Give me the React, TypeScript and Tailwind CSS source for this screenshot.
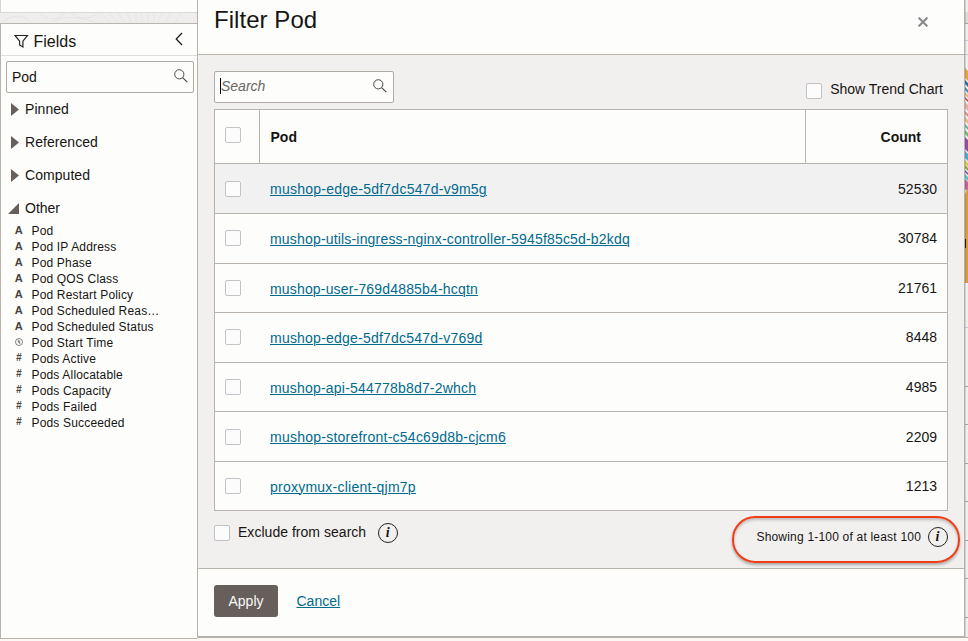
import React from "react";

const groups = ["Pinned", "Referenced", "Computed"];

const fields = [
  { kind: "A", name: "Pod" },
  { kind: "A", name: "Pod IP Address" },
  { kind: "A", name: "Pod Phase" },
  { kind: "A", name: "Pod QOS Class" },
  { kind: "A", name: "Pod Restart Policy" },
  { kind: "A", name: "Pod Scheduled Reas…" },
  { kind: "A", name: "Pod Scheduled Status" },
  { kind: "T", name: "Pod Start Time" },
  { kind: "#", name: "Pods Active" },
  { kind: "#", name: "Pods Allocatable" },
  { kind: "#", name: "Pods Capacity" },
  { kind: "#", name: "Pods Failed" },
  { kind: "#", name: "Pods Succeeded" },
];

const rows = [
  { pod: "mushop-edge-5df7dc547d-v9m5g", count: "52530", h: "h-[50px] bg-[#f1f1f2]", link: "pt-0.5 tracking-[0.24px]" },
  { pod: "mushop-utils-ingress-nginx-controller-5945f85c5d-b2kdq", count: "30784", h: "h-[50px] pb-0.5", link: "pt-1 tracking-[0.18px]" },
  { pod: "mushop-user-769d4885b4-hcqtn", count: "21761", h: "h-[49px]", link: "pt-0.5 tracking-[0.17px]" },
  { pod: "mushop-edge-5df7dc547d-v769d", count: "8448", h: "h-[50px] pb-0.5", link: "pt-1 tracking-[0.22px]" },
  { pod: "mushop-api-544778b8d7-2whch", count: "4985", h: "h-[49px]", link: "pt-0.5 tracking-[0.2px]" },
  { pod: "mushop-storefront-c54c69d8b-cjcm6", count: "2209", h: "h-[50px]", link: "pt-0.5 tracking-[0.24px]" },
  { pod: "proxymux-client-qjm7p", count: "1213", h: "h-[49px] pb-px", link: "pt-0.5 tracking-[0.24px]" },
];

function SearchIcon() {
  return (
    <svg width="14" height="14" viewBox="0 0 14 14" fill="none" stroke="#4c4845" className="shrink-0">
      <circle cx="5.3" cy="5.3" r="4.6" strokeWidth="1" />
      <path d="M8.6 8.6 L13.3 13.1" strokeWidth="1.2" />
    </svg>
  );
}

function InfoIcon() {
  return (
    <span className="flex size-5 shrink-0 items-center justify-center rounded-full border border-[#222] pr-px font-['Liberation_Serif',serif] text-[14px] leading-none font-bold text-[#161513] italic">
      i
    </span>
  );
}

function Checkbox() {
  return <span className="block size-4 shrink-0 rounded-[2px] border border-[#c2c3c6] bg-[#fcfcfd]" />;
}

function FieldKind({ kind }: { kind: string }) {
  if (kind === "T") {
    return (
      <svg width="8" height="8" viewBox="0 0 8 8" fill="none" stroke="#55504c" strokeWidth="0.7" className="mb-0.5">
        <circle cx="4" cy="4" r="3.5" />
        <path d="M3.4 1.8 V4.2 L5.2 6 M4.6 2.4 V5" />
      </svg>
    );
  }
  if (kind === "#") {
    return <span className="mb-0.5 text-[10px] leading-none font-bold text-[#45413e] italic">#</span>;
  }
  return <span className="mb-0.5 text-[11px] leading-none font-bold text-[#45413e]">A</span>;
}

function FieldsPanel() {
  return (
    <aside className="flex h-[641px] w-[197px] shrink-0 flex-col">
      <div className="h-[13px] border-b border-l border-b-[#d8d9da] border-l-[#d8d6d3] bg-[#fdfdfc]" />
      <svg width="197" height="10" className="block shrink-0 bg-[#f0eeec]" fill="none" stroke="#e7e6e4">
        <path d="M2 9 C12 1 22 2 30 8 M40 0 C47 8 59 8 65 0 M52 9 C70 0 84 7 96 9 M70 0 C82 8 92 5 99 0 M100 0 L110 9 M108 0 L118 9 M118 0 L124 9 M127 0 L131 9 M136 0 V9 M142 0 V9 M148 0 V9 M154 0 V9 M162 0 L158 9 M170 0 L166 9 M180 0 L176 9" />
      </svg>
      <div className="h-[616px] border-t border-b border-l border-[#bab4ae] bg-[#fdfdfb]">
        <div className="flex h-8 items-center border-b border-[#dddfdf] pr-[14px] pl-[13px]">
          <svg width="15" height="15" viewBox="0 0 15 15" fill="none" stroke="#24211f" strokeWidth="1.2" className="mt-[3px]">
            <path d="M1 1.5 H13.4 L8.9 7.2 V12.9 L5.6 11 V7.2 Z" />
          </svg>
          <span className="mt-[5px] ml-[4.5px] flex-1 text-[16px] leading-5">Fields</span>
          <svg width="8" height="14" viewBox="0 0 8 14" fill="none" stroke="#161513" strokeWidth="1.2" className="mb-0.5">
            <path d="M7 1 L1.2 7 L7 13" />
          </svg>
        </div>
        <div className="mt-[5px] ml-[5px] flex h-8 w-[188px] items-center justify-between rounded-[2px] border border-[#b0aba5] bg-[#fdfdfb] pr-[5px] pl-[5px]">
          <span className="mb-px text-[14px] leading-4">Pod</span>
          <span className="-mt-0.5">
            <SearchIcon />
          </span>
        </div>
        <ul className="-mt-px text-[14px] leading-4">
          {groups.map((g) => (
            <li key={g} className="flex h-[33px] items-center pl-[10px]">
              <svg width="8" height="13" viewBox="0 0 8 13" className="mt-px mr-[6px]">
                <path d="M0 0 L8 6.5 L0 13 Z" fill="#665f5b" />
              </svg>
              <span className="tracking-[0.05px]">{g}</span>
            </li>
          ))}
          <li className="flex h-[33px] items-center pl-[7px]">
            <svg width="11" height="11" viewBox="0 0 11 11" className="mt-px mr-[6px]">
              <path d="M11 0 V11 H0 Z" fill="#665f5b" />
            </svg>
            Other
          </li>
        </ul>
        <ul className="-mt-px text-[12px] leading-4">
          {fields.map((f) => (
            <li key={f.name} className="flex h-4 items-center whitespace-nowrap">
              <span className="flex w-[30.5px] justify-center pl-[5px]">
                <FieldKind kind={f.kind} />
              </span>
              <span className="mb-px tracking-[0.17px]">{f.name}</span>
            </li>
          ))}
        </ul>
      </div>
      <div className="h-0.5 bg-[#fbf8f6]" />
    </aside>
  );
}

function PodTable() {
  return (
    <div className="mt-[6px] h-[402px] w-[734px] border border-[#b8b3ac] bg-[#fdfdfb]">
      <div className="flex h-[54px] items-stretch border-b border-[#b8b3ac] text-[14px] font-bold">
        <div className="flex w-[45px] items-center border-r border-[#b8b3ac] pb-[3px] pl-[10px]">
          <Checkbox />
        </div>
        <div className="flex w-[546px] items-center border-r border-[#b8b3ac] pt-px pl-[10.5px]">Pod</div>
        <div className="flex flex-1 items-center justify-end pt-px pr-[26px]">Count</div>
      </div>
      {rows.map((r) => (
        <div key={r.pod} className={`${r.h} flex items-center border-b border-[#b8b3ac] pr-[10px] pl-[10px] text-[14px] last:border-b-0`}>
          <Checkbox />
          <span className={`${r.link} ml-[29px] flex-1`}>
            <a className="text-[#006a8e] underline decoration-1 underline-offset-[1px]">{r.pod}</a>
          </span>
          <span className="pt-px">{r.count}</span>
        </div>
      ))}
    </div>
  );
}

function FilterDialog() {
  return (
    <section className="flex h-[638px] w-[768px] shrink-0 flex-col border-r border-b-2 border-l border-[#b6b1ab] bg-[#fdfdfb]">
      <header className="flex h-[55px] shrink-0 items-start justify-between border-b border-[#bab4ac] pr-[36px] pl-4">
        <h1 className="mt-[6px] text-[24px] leading-7 tracking-[0.05px]">Filter Pod</h1>
        <svg width="10" height="10" viewBox="0 0 10 10" className="mt-[17px]" stroke="#8b8c8e" strokeWidth="2.2">
          <path d="M0.6 0.6 L9.4 9.4 M9.4 0.6 L0.6 9.4" />
        </svg>
      </header>
      <div className="h-[514px] shrink-0 border-b border-[#bab4ac] bg-[#f2f0ef] px-4 pt-4">
        <div className="flex h-8 w-[734px] items-start justify-between">
          <div className="flex h-8 w-[180px] items-center rounded-[2px] border border-[#b0aba5] bg-[#fdfdfb] pr-[6px] pl-[5px]">
            <span className="mb-0.5 h-4 w-px bg-black" />
            <span className="mb-0.5 flex-1 text-[14px] leading-4 text-[#696663] italic">Search</span>
            <span className="-mt-0.5">
              <SearchIcon />
            </span>
          </div>
          <div className="flex items-start pt-[10px] pr-[5px]">
            <span className="mt-[2px]">
              <Checkbox />
            </span>
            <span className="ml-2 text-[14px] leading-4">Show Trend Chart</span>
          </div>
        </div>
        <PodTable />
        <div className="flex h-[57px] w-[734px] items-start">
          <span className="mt-[14px]">
            <Checkbox />
          </span>
          <span className="mt-[13px] ml-2 text-[14px] leading-4 tracking-[0.03px]">Exclude from search</span>
          <span className="mt-3 ml-3">
            <InfoIcon />
          </span>
          <div className="relative mt-4 ml-auto flex items-center">
            <span className="mr-[7px] text-[12px] leading-4 tracking-[0.2px]">Showing 1-100 of at least 100</span>
            <InfoIcon />
            <span className="absolute -top-[11px] -right-[12px] h-[47px] w-[228px] rounded-[23px] border-2 border-[#f03c17] shadow-[0_2px_3px_rgba(0,0,0,0.3),inset_0_2px_3px_rgba(0,0,0,0.22)]" />
          </div>
        </div>
      </div>
      <footer className="flex flex-1 items-start pt-4 pl-4 text-[14px]">
        <button className="h-8 w-16 rounded-[3px] bg-[#665f5b] text-[#fbf9f8]">Apply</button>
        <a className="mt-[6px] ml-[18.5px] leading-5 text-[#006a8e] underline decoration-1 underline-offset-[1px]">Cancel</a>
      </footer>
    </section>
  );
}

const strands = [
  { y: 68, h: 10, c: "#f0a23a" },
  { y: 80, h: 4, c: "#31749b" },
  { y: 87, h: 3, c: "#4b8db5" },
  { y: 92, h: 3, c: "#f0b27c" },
  { y: 97, h: 2, c: "#b9453d" },
  { y: 102, h: 6, c: "#e8b1a0" },
  { y: 111, h: 3, c: "#e58c82" },
  { y: 117, h: 4, c: "#efbb73" },
  { y: 124, h: 3, c: "#65b9a0" },
  { y: 130, h: 4, c: "#70bd72" },
  { y: 137, h: 12, c: "#9a4aaa" },
  { y: 151, h: 7, c: "#45aadd" },
  { y: 160, h: 4, c: "#d9ca43" },
  { y: 165, h: 3, c: "#91a540" },
  { y: 170, h: 2, c: "#7043a0" },
  { y: 174, h: 4, c: "#55c3c6" },
  { y: 179, h: 10, c: "#cf5c9c" },
];

function ChartEdge() {
  return (
    <svg width="3" height="641" viewBox="0 0 3 641" className="block shrink-0">
      <rect width="3" height="641" fill="#f0efee" />
      <rect y="12" width="3" height="11" fill="#dedbd8" />
      {[23, 386, 424, 463, 501, 540, 578, 617].map((y) => (
        <rect key={y} y={y} width="3" height="1" fill="#aaa7a3" />
      ))}
      {[40, 54, 327].map((y) => (
        <rect key={y} y={y} width="3" height="1" fill="#c8cdd4" />
      ))}
      {strands.map((s) => (
        <path key={s.y} d={`M0 ${s.y} L3 ${s.y + 3} V${s.y + s.h + 3} L0 ${s.y + s.h} Z`} fill={s.c} />
      ))}
      <path d="M0 194 L3 188 V283 H0 Z" fill="#e29a38" />
      <rect y="239" width="1" height="9" fill="#111" />
      <rect width="1" height="638" fill="#55504a" opacity="0.2" />
      <rect y="637" width="3" height="1" fill="#bab4ae" />
      <rect y="638" width="3" height="3" fill="#fbf8f6" />
    </svg>
  );
}

export default function App() {
  return (
    <main className="flex h-[641px] w-[968px] overflow-hidden bg-[#fbf8f6] font-['Liberation_Sans',Arial,sans-serif] text-[#161513]">
      <FieldsPanel />
      <FilterDialog />
      <ChartEdge />
    </main>
  );
}
